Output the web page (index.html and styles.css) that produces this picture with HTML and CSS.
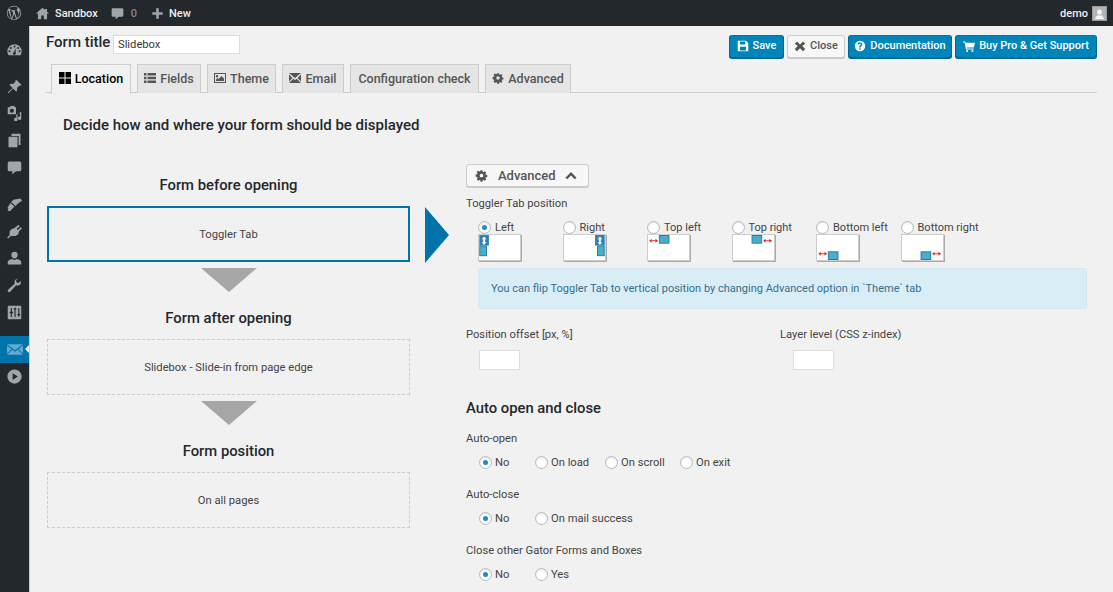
FILE: index.html
```html
<!DOCTYPE html>
<html lang="en">
<head>
    <meta charset="UTF-8">
    <title>Slidebox</title>
    <link rel="stylesheet" href="styles.css">
</head>
<body>
    <svg class="defs" width="0" height="0">
        <symbol id="i-gauge" viewBox="0 0 20 20"><path d="M10 3a9.500 9.500 0 0 0-9.500 9.500c0 1.900.6 3.600 1.500 5h16c.9-1.400 1.500-3.100 1.500-5A9.500 9.500 0 0 0 10 3zM10 4.800a1.300 1.300 0 1 1 0 2.600 1.300 1.300 0 0 1 0-2.600zM5 6.800a1.300 1.300 0 1 1 0 2.600 1.300 1.300 0 0 1 0-2.600zm10 0a1.300 1.300 0 1 1 0 2.600 1.300 1.300 0 0 1 0-2.600zM3.300 11a1.300 1.300 0 1 1 0 2.600 1.300 1.300 0 0 1 0-2.600zm13.400 0a1.300 1.300 0 1 1 0 2.600 1.300 1.300 0 0 1 0-2.600zM12.500 7.500l-1.300 6.300a1.900 1.900 0 1 1-1.900-.4z" fill-rule="evenodd"/></symbol>
        <symbol id="i-pin" viewBox="0 0 20 20"><path d="M12 .5l7.500 7.500-1.500 1-1.200-.4-3.500 3.500c.5 1.900.2 3.500-.8 5L8 12.500 2.500 18.500l-1.500.5.500-1.500L7.500 12 3 7.500c1.500-1 3.100-1.300 5-.8l3.500-3.500-.4-1.200z"/></symbol>
        <symbol id="i-media" viewBox="0 0 20 20"><path d="M1 1.500h2.500L5 0h4.500L11 1.500h1v9.500H1zM6.500 3.500a2.800 2.800 0 1 0 0 5.600 2.800 2.800 0 0 0 0-5.600z" fill-rule="evenodd"/><path d="M19 8v9a2.300 2.300 0 1 1-1.700-2.200V10L14 10.800V18.500a2.300 2.300 0 1 1-1.700-2.200V12z" transform="translate(0 -.5)"/></symbol>
        <symbol id="i-pages" viewBox="0 0 20 20"><path d="M6 1h12v15h-2.500V4H6z"/><path d="M2 5h12v14H2z"/></symbol>
        <symbol id="i-comment" viewBox="0 0 20 20"><path d="M3 2h14a2 2 0 0 1 2 2v9a2 2 0 0 1-2 2h-5l-5 4v-4H3a2 2 0 0 1-2-2V4a2 2 0 0 1 2-2z"/></symbol>
        <symbol id="i-brush" viewBox="0 0 20 20"><path d="M20 5l-2-3-9.500 1.500-3 3.500 6 5 3-3.500z"/><path d="M4.500 8L.5 14.500l1.500 1.500-1.500 2 3.500 1 6-6.500z"/></symbol>
        <symbol id="i-plugin" viewBox="0 0 20 20"><path d="M15.500 1l1.500 1.500-4 4 1.500 1.500 4-4 1.500 1.500-4 4.500-1 3.500-3.500 2.500H5L2 19H.5v-1.500L3.500 15v-5l2.500-3.500 3.500-1z"/></symbol>
        <symbol id="i-user" viewBox="0 0 20 20"><path d="M10 1a4.200 4.200 0 0 1 4.200 4.200c0 2.600-1.800 4.800-4.200 4.800S5.800 7.800 5.800 5.200A4.200 4.200 0 0 1 10 1zM7 10.500c1.800 1.500 4.200 1.500 6 0 3.500.5 6 2 6 4.500v3H1v-3c0-2.500 2.500-4 6-4.500z"/></symbol>
        <symbol id="i-wrench" viewBox="0 0 20 20"><path d="M14.500 1C12 1 10 3 10 5.500c0 .7.100 1.300.4 1.900L1.500 15.500c-.8.800-.7 2 0 2.800s2 .8 2.800 0l7.800-8.800c.6.300 1.200.5 2 .5 2.500 0 4.500-2 4.500-4.500 0-.5-.1-1-.2-1.500l-3 2.700-2.800-1-.7-2.700 2.900-2.300c-.2 0-.8-.2-1.300-.2z"/></symbol>
        <symbol id="i-sliders" viewBox="0 0 20 20"><path d="M2 1h16a1 1 0 0 1 1 1v16a1 1 0 0 1-1 1H2a1 1 0 0 1-1-1V2a1 1 0 0 1 1-1zM5 4v5H3.500v2H5v5h1.500v-5H8V9H6.500V4zm3.500 2l1.500 0v10h1.500V6H13l-2.200-3zM15 4v8h-1.500l2.200 4 2.300-4H16.500V4z" fill-rule="evenodd"/></symbol>
        <symbol id="i-mail" viewBox="0 0 24 16"><path d="M0 0h24L12 9zM0 2v12l7-6.500zM24 2v12l-7-6.500zM8 8.500l4 3 4-3 8 7.500H0z"/></symbol>
        <symbol id="i-play" viewBox="0 0 20 20"><path d="M10 .5a9.500 9.500 0 1 1 0 19 9.500 9.500 0 0 1 0-19zM7.500 5.500v9l7-4.500z" fill-rule="evenodd"/></symbol>
        <symbol id="i-gear" viewBox="0 0 20 20"><path d="M8.300 1h3.400l.5 2.500 1.500.6 2.100-1.400 2.400 2.400-1.400 2.100.6 1.500 2.500.5v3.400l-2.500.5-.6 1.500 1.400 2.100-2.400 2.400-2.100-1.400-1.500.6-.5 2.500H8.300l-.5-2.500-1.500-.6-2.100 1.400-2.400-2.400 1.400-2.100-.6-1.500L0 11.700V8.300l2.500-.5.600-1.500-1.400-2.100 2.400-2.400 2.100 1.400 1.500-.6zM10 6.800a3.200 3.200 0 1 0 0 6.400 3.200 3.200 0 0 0 0-6.400z" fill-rule="evenodd" transform="translate(1 1) scale(.9)"/></symbol>
    </svg>

    <div class="adminbar">
        <svg class="wp-logo" viewBox="0 0 20 20"><path d="M10 1a9 9 0 1 0 0 18 9 9 0 0 0 0-18zm0 1c2.100 0 4 .8 5.400 2.100-1-.1-1.900.6-1.900 1.600 0 .9.500 1.500 1 2.300.4.700.8 1.500.8 2.700 0 .8-.3 1.800-.7 3.100l-.9 3-3.300-9.800c.5 0 1-.1 1-.1.500 0 .4-.8 0-.7 0 0-1.500.1-2.400.1-.9 0-2.400-.1-2.400-.1-.5 0-.5.700 0 .7 0 0 .4.100.9.100l1.400 3.800-2 5.900L5 5.900c.5 0 1-.1 1-.1.500 0 .4-.8 0-.7 0 0-1.500.1-2.400.1h-.5A8 8 0 0 1 10 2zM2 10c0-1.200.3-2.300.7-3.300l3.800 10.500A8 8 0 0 1 2 10zm8 8c-.8 0-1.500-.1-2.200-.3l2.300-6.800 2.400 6.500.1.100c-.8.300-1.700.5-2.600.5zm7.100-12.200c.6 1.100.9 2.400.9 3.800 0 2.900-1.600 5.500-3.900 6.900l2.400-7c.5-1.100.6-2 .6-2.800 0-.3 0-.6 0-.9z" fill-rule="evenodd"/></svg>
        <div class="bar-item bar-site">
            <svg class="bar-icon" viewBox="0 0 20 20"><path d="M10 1L0 10h3v9h5v-6h4v6h5v-9h3l-3-2.700V3h-3v1.600z"/></svg>
            <span class="bar-strong">Sandbox</span>
        </div>
        <div class="bar-item bar-comments">
            <svg class="bar-icon" viewBox="0 0 20 20"><use href="#i-comment"/></svg>
            <span class="bar-dim">0</span>
        </div>
        <div class="bar-item bar-new">
            <svg class="bar-icon" viewBox="0 0 20 20"><path d="M8 2h4v6h6v4h-6v6H8v-6H2V8h6z"/></svg>
            <span class="bar-strong">New</span>
        </div>
        <div class="bar-user">
            <span class="bar-strong">demo</span>
            <span class="avatar"><svg viewBox="0 0 16 16"><path d="M8 3a3 3 0 0 1 3 3c0 1.800-1.300 3.500-3 3.500S5 7.800 5 6a3 3 0 0 1 3-3zM2.500 15c.2-3 2.500-4.500 3.500-4.800 1.200.8 2.800.8 4 0 1 .3 3.300 1.800 3.500 4.800z"/></svg></span>
        </div>
    </div>

    <div class="layout">
        <div class="sidemenu">
            <div class="menu-group">
                <div class="menu-item"><svg><use href="#i-gauge"/></svg></div>
            </div>
            <div class="menu-group">
                <div class="menu-item"><svg><use href="#i-pin"/></svg></div>
                <div class="menu-item"><svg><use href="#i-media"/></svg></div>
                <div class="menu-item"><svg><use href="#i-pages"/></svg></div>
                <div class="menu-item"><svg><use href="#i-comment"/></svg></div>
            </div>
            <div class="menu-group">
                <div class="menu-item"><svg><use href="#i-brush"/></svg></div>
                <div class="menu-item"><svg><use href="#i-plugin"/></svg></div>
                <div class="menu-item"><svg><use href="#i-user"/></svg></div>
                <div class="menu-item"><svg><use href="#i-wrench"/></svg></div>
                <div class="menu-item"><svg><use href="#i-sliders"/></svg></div>
            </div>
            <div class="menu-group">
                <div class="menu-item active"><svg class="mail-icon"><use href="#i-mail"/></svg></div>
                <div class="menu-item"><svg><use href="#i-play"/></svg></div>
            </div>
        </div>

        <div class="content">
            <div class="topline">
                <div class="title-wrap">
                    <label class="form-title">Form title</label>
                    <input class="title-input" type="text" value="Slidebox">
                </div>
                <div class="actions">
                    <button class="btn primary btn-save">
                        <svg viewBox="0 0 16 16"><path d="M1 1h11l3 3v11H1zM4 2v4h7V2zM4 9v5h8V9z" fill-rule="evenodd"/></svg>Save
                    </button>
                    <button class="btn plain btn-close">
                        <svg viewBox="0 0 16 16"><path d="M4 2l4 4 4-4 3 3-4 3 4 4-3 3-4-4-4 4-3-3 4-4-4-3z"/></svg>Close
                    </button>
                    <button class="btn primary btn-docs">
                        <svg viewBox="0 0 16 16"><path d="M8 1a7 7 0 1 1 0 14A7 7 0 0 1 8 1zM7 11v2h2v-2zM8 3C6.300 3 5 4 4.800 5.500l1.900.4C6.900 5.200 7.300 4.800 8 4.800c.7 0 1.200.4 1.200 1 0 .5-.3.8-1 1.200C7.300 7.500 7 8.100 7 9v1h2v-.7c0-.4.200-.6.800-1C10.600 7.700 11.200 7 11.200 5.800 11.200 4.100 9.800 3 8 3z" fill-rule="evenodd"/></svg>Documentation
                    </button>
                    <button class="btn primary btn-buy">
                        <svg viewBox="0 0 16 16"><path d="M0 2h3l.5 1.500H16l-1.500 6.500H5l.3 1.200h9v1.300H4L2 3.300H0z"/><circle cx="5.500" cy="14.500" r="1.300"/><circle cx="12.500" cy="14.500" r="1.300"/></svg>Buy Pro &amp; Get Support
                    </button>
                </div>
            </div>

            <div class="tabs">
                <div class="tab current tab-location">
                    <svg viewBox="0 0 12 12"><path d="M0 0h5.500v5.500H0zM6.500 0H12v5.500H6.500zM0 6.500h5.500V12H0zM6.500 6.500H12V12H6.500z"/></svg>Location
                </div>
                <div class="tab tab-fields">
                    <svg viewBox="0 0 12 12"><path d="M0 1h2.500v2.500H0zM3.500 1H12v2.500H3.500zM0 4.700h2.500v2.500H0zM3.500 4.700H12v2.500H3.500zM0 8.400h2.500v2.500H0zM3.500 8.400H12v2.500H3.500z"/></svg>Fields
                </div>
                <div class="tab tab-theme">
                    <svg viewBox="0 0 12 12"><path d="M0 1h12v10H0zM1 2v8h10V2zM3 3a1.200 1.200 0 1 1 0 2.400A1.200 1.200 0 0 1 3 3zM2 9V7.500L3.500 6l1 1 3-3L10 6.500V9z" fill-rule="evenodd"/></svg>Theme
                </div>
                <div class="tab tab-email">
                    <svg viewBox="0 0 12 10"><path d="M0 0h12L6 5zM0 1.500v7L3.500 5zM12 1.500v7L8.500 5zM4.300 5.700L6 7l1.700-1.300L12 10H0z"/></svg>Email
                </div>
                <div class="tab tab-config">Configuration check</div>
                <div class="tab tab-advanced">
                    <svg viewBox="0 0 20 20"><use href="#i-gear"/></svg>Advanced
                </div>
            </div>

            <h2 class="lead">Decide how and where your form should be displayed</h2>

            <div class="columns">
                <div class="flow-col">
                    <h3 class="step-title">Form before opening</h3>
                    <div class="step-box selected">Toggler Tab</div>
                    <div class="down-arrow"></div>
                    <h3 class="step-title">Form after opening</h3>
                    <div class="step-box">Slidebox - Slide-in from page edge</div>
                    <div class="down-arrow"></div>
                    <h3 class="step-title">Form position</h3>
                    <div class="step-box">On all pages</div>
                </div>

                <div class="right-arrow"></div>

                <div class="options-col">
                    <button class="adv-toggle">
                        <svg class="adv-gear" viewBox="0 0 20 20"><use href="#i-gear"/></svg>
                        <span>Advanced</span>
                        <svg class="adv-chevron" viewBox="0 0 14 10"><path d="M7 1l6.500 6.500-2 2L7 5 2.500 9.500l-2-2z"/></svg>
                    </button>

                    <div class="field-label tab-pos-label">Toggler Tab position</div>
                    <div class="tab-positions">
                        <div class="pos">
                            <div class="radio-line"><span class="radio on"></span>Left</div>
                            <svg class="preview" viewBox="0 0 42 26">
                                <rect x="0" y="0" width="10" height="11" fill="#2f7fb8"/>
                                <path d="M5 1.500l2.500 3h-1.500v3h1.500l-2.500 3-2.500-3h1.500v-3h-1.500z" fill="#fff"/>
                                <rect x="0.500" y="11.500" width="7" height="10" fill="#4badcc" stroke="#1f7f9c"/>
                            </svg>
                        </div>
                        <div class="pos">
                            <div class="radio-line"><span class="radio"></span>Right</div>
                            <svg class="preview" viewBox="0 0 42 26">
                                <rect x="32" y="0" width="10" height="11" fill="#2f7fb8"/>
                                <path d="M37 1.500l2.500 3h-1.500v3h1.500l-2.500 3-2.500-3h1.500v-3h-1.500z" fill="#fff"/>
                                <rect x="34.500" y="11.500" width="7" height="10" fill="#4badcc" stroke="#1f7f9c"/>
                            </svg>
                        </div>
                        <div class="pos">
                            <div class="radio-line"><span class="radio"></span>Top left</div>
                            <svg class="preview" viewBox="0 0 42 26">
                                <path d="M1.500 6h8" stroke="#d0312d" fill="none"/>
                                <path d="M1 6l2.500-2v4zM10 6L7.500 4v4z" fill="#d0312d"/>
                                <rect x="11.500" y="0.500" width="10" height="8" fill="#4badcc" stroke="#1f7f9c"/>
                            </svg>
                        </div>
                        <div class="pos">
                            <div class="radio-line"><span class="radio"></span>Top right</div>
                            <svg class="preview" viewBox="0 0 42 26">
                                <rect x="19.500" y="0.500" width="10" height="8" fill="#4badcc" stroke="#1f7f9c"/>
                                <path d="M32 6h8" stroke="#d0312d" fill="none"/>
                                <path d="M31 6l2.500-2v4zM40 6l-2.500-2v4z" fill="#d0312d"/>
                            </svg>
                        </div>
                        <div class="pos">
                            <div class="radio-line"><span class="radio"></span>Bottom left</div>
                            <svg class="preview" viewBox="0 0 42 26">
                                <path d="M2 19.500h8" stroke="#d0312d" fill="none"/>
                                <path d="M1 19.500l2.500-2v4zM10 19.500l-2.500-2v4z" fill="#d0312d"/>
                                <rect x="11.500" y="17.500" width="10" height="8" fill="#4badcc" stroke="#1f7f9c"/>
                            </svg>
                        </div>
                        <div class="pos">
                            <div class="radio-line"><span class="radio"></span>Bottom right</div>
                            <svg class="preview" viewBox="0 0 42 26">
                                <rect x="19.500" y="17.500" width="10" height="8" fill="#4badcc" stroke="#1f7f9c"/>
                                <path d="M32 19.500h8" stroke="#d0312d" fill="none"/>
                                <path d="M31 19.500l2.500-2v4zM40 19.500l-2.500-2v4z" fill="#d0312d"/>
                            </svg>
                        </div>
                    </div>

                    <div class="notice">You can flip Toggler Tab to vertical position by changing Advanced option in `Theme` tab</div>

                    <div class="two-fields">
                        <div class="small-field">
                            <div class="field-label">Position offset [px, %]</div>
                            <input class="num-input" type="text">
                        </div>
                        <div class="small-field">
                            <div class="field-label">Layer level (CSS z-index)</div>
                            <input class="num-input" type="text">
                        </div>
                    </div>

                    <h3 class="section-title">Auto open and close</h3>

                    <div class="field-label">Auto-open</div>
                    <div class="radio-row">
                        <div class="radio-line w-56"><span class="radio on"></span>No</div>
                        <div class="radio-line w-70"><span class="radio"></span>On load</div>
                        <div class="radio-line w-75"><span class="radio"></span>On scroll</div>
                        <div class="radio-line"><span class="radio"></span>On exit</div>
                    </div>

                    <div class="field-label">Auto-close</div>
                    <div class="radio-row">
                        <div class="radio-line w-56"><span class="radio on"></span>No</div>
                        <div class="radio-line"><span class="radio"></span>On mail success</div>
                    </div>

                    <div class="field-label">Close other Gator Forms and Boxes</div>
                    <div class="radio-row">
                        <div class="radio-line w-56"><span class="radio on"></span>No</div>
                        <div class="radio-line"><span class="radio"></span>Yes</div>
                    </div>
                </div>
            </div>
        </div>
    </div>
</body>
</html>
```

FILE: styles.css
```css
* {
    box-sizing: border-box;
}

html, body {
    height: 100%;
}

body {
    margin: 0;
    overflow: hidden;
    background: #f1f1f1;
    color: #444;
    font-family: Roboto, "Liberation Sans", sans-serif;
    font-size: 11.200px;
}

.defs {
    position: absolute;
}

/* top bar */
.adminbar {
    height: 26px;
    background: #23282d;
    color: #eee;
    display: flex;
    align-items: center;
    font-size: 11px;
}

.wp-logo {
    width: 16px;
    height: 16px;
    margin-left: 6px;
    fill: #a0a5aa;
}

.bar-item {
    display: flex;
    align-items: center;
}

.bar-icon {
    width: 13px;
    height: 13px;
    fill: #a0a5aa;
}

.bar-site {
    margin-left: 14px;
}

.bar-site .bar-icon {
    margin-right: 6px;
}

.bar-comments {
    margin-left: 13px;
}

.bar-comments .bar-icon {
    margin-right: 7px;
}

.bar-new {
    margin-left: 14px;
}

.bar-new .bar-icon {
    margin-right: 5px;
}

.bar-strong {
    font-weight: 500;
    color: #eee;
}

.bar-dim {
    color: #82878c;
    font-weight: 500;
}

.bar-user {
    margin-left: auto;
    margin-right: 6px;
    display: flex;
    align-items: center;
    gap: 4px;
}

.avatar {
    width: 15px;
    height: 15px;
    background: #b4b4b4;
    border: 1px solid #999;
    display: block;
}

.avatar svg {
    display: block;
    width: 13px;
    height: 13px;
    fill: #f4f4f4;
}

/* layout */
.layout {
    display: flex;
    height: 566px;
}

.sidemenu {
    width: 30px;
    flex: none;
    background: #23282d;
    border-right: 1px solid #c9cbcd;
    padding-top: 10px;
    display: flex;
    flex-direction: column;
    gap: 10px;
}

.menu-item {
    height: 27px;
    display: flex;
    align-items: center;
    justify-content: center;
    position: relative;
}

.menu-item svg {
    width: 15px;
    height: 15px;
    fill: #a0a5aa;
}

.menu-item.active {
    background: #0073aa;
}

.menu-item.active svg {
    width: 16px;
    height: 11px;
    fill: #64a9cf;
}

.menu-item.active::after {
    content: "";
    position: absolute;
    right: 0;
    top: 9px;
    border: 4px solid transparent;
    border-right: 4px solid #f1f1f1;
    border-left-width: 0;
}

.content {
    flex: 1;
    padding: 9px 16px 0 16px;
    min-width: 0;
}

.topline {
    display: flex;
    justify-content: space-between;
    height: 29px;
}

.title-wrap {
    display: flex;
    align-items: flex-start;
    gap: 4px;
}

.form-title {
    width: 64px;
    margin-right: -1px;
    font-size: 15px;
    font-weight: 500;
    color: #23282d;
    line-height: 14px;
    white-space: nowrap;
}

.title-input {
    width: 127px;
    height: 19px;
    border: 1px solid #ddd;
    background: #fff;
    padding: 0 4px;
    font: 11.200px Roboto, "Liberation Sans", sans-serif;
    color: #32373c;
}

.actions {
    display: flex;
    gap: 3px;
    height: 23px;
}

.btn {
    height: 23px;
    border-radius: 3px;
    font: 500 11px Roboto, "Liberation Sans", sans-serif;
    padding: 0 0 2px;
    display: flex;
    align-items: center;
    justify-content: center;
    gap: 4px;
    border: 1px solid #006799;
}

.btn svg {
    width: 12px;
    height: 12px;
    fill: currentColor;
}

.btn-save {
    width: 55px;
}

.btn-close {
    width: 58px;
}

.btn-docs {
    width: 104px;
}

.btn-buy {
    width: 142px;
}

.btn.primary {
    background: #0085ba;
    color: #fff;
    border-color: #0073aa #006799 #006799;
    box-shadow: 0 1px 0 #006799;
}

.btn.plain {
    background: #f7f7f7;
    color: #555;
    border-color: #ccc;
    box-shadow: 0 1px 0 #ccc;
}

/* tabs */
.tabs {
    display: flex;
    height: 29px;
    padding-left: 5px;
    border-bottom: 1px solid #ccc;
}

.tab {
    height: 29px;
    margin-right: 6px;
    padding-bottom: 2px;
    display: flex;
    align-items: center;
    justify-content: center;
    gap: 4px;
    background: #e5e5e5;
    border: 1px solid #ccc;
    border-bottom: none;
    font-size: 12.500px;
    font-weight: 500;
    color: #555;
}

.tab svg {
    width: 12px;
    height: 12px;
    fill: #555;
}

.tab-location {
    width: 80px;
}

.tab-fields {
    width: 64px;
}

.tab-theme {
    width: 69px;
}

.tab-email {
    width: 62px;
}

.tab-config {
    width: 129px;
}

.tab-advanced {
    width: 86px;
}

.tab.current {
    background: #f1f1f1;
    color: #000;
    height: 30px;
    padding-bottom: 3px;
}

.tab.current svg {
    fill: #000;
}

.lead {
    margin: 24px 0 0 17px;
    font-size: 15px;
    font-weight: 500;
    line-height: 17px;
    color: #23282d;
}

.columns {
    display: flex;
    align-items: flex-start;
}

/* left column */
.flow-col {
    width: 363px;
    margin-left: 1px;
    padding-top: 43px;
    flex: none;
}

.step-title {
    margin: 0;
    height: 29px;
    font-size: 14.800px;
    font-weight: 500;
    line-height: 17px;
    text-align: center;
    color: #23282d;
}

.step-box {
    height: 56px;
    border: 1px dashed #ccc;
    display: flex;
    align-items: center;
    justify-content: center;
    color: #444;
}

.step-box.selected {
    border: 2px solid #0073aa;
}

.down-arrow {
    width: 0;
    margin: 6px auto 18px;
    border-top: 24px solid #a6a6a6;
    border-left: 28px solid transparent;
    border-right: 28px solid transparent;
}

.right-arrow {
    width: 0;
    flex: none;
    margin: 73px 17px 0 15px;
    border-left: 24px solid #0073aa;
    border-top: 28px solid transparent;
    border-bottom: 28px solid transparent;
}

/* right column */
.options-col {
    flex: 1;
    padding-top: 30px;
    padding-right: 10px;
}

.adv-toggle {
    width: 123px;
    height: 23px;
    background: #f7f7f7;
    border: 1px solid #ccc;
    border-radius: 3px;
    box-shadow: 0 1px 0 #ccc;
    display: flex;
    align-items: center;
    padding: 0 0 0 8px;
    color: #555;
    font: 500 13px Roboto, "Liberation Sans", sans-serif;
}

.adv-gear {
    width: 13px;
    height: 13px;
    fill: #555;
    margin-right: 10px;
}

.adv-chevron {
    width: 12px;
    height: 9px;
    fill: #555;
    margin-left: 9px;
}

.field-label {
    line-height: 14px;
    color: #444;
}

.tab-pos-label {
    margin-top: 10px;
}

.tab-positions {
    display: flex;
    padding-left: 12px;
    margin-top: 9px;
    font-size: 11px;
}

.pos {
    width: 84.500px;
}

.pos .radio {
    margin-right: 4px;
}

.preview {
    display: block;
    width: 43px;
    height: 27px;
    margin-top: -2px;
    background: #fff;
    border: 1px solid #ccc;
    box-shadow: 1px 1px 0 #aaa;
}

.radio-line {
    display: flex;
    align-items: center;
    height: 16px;
    line-height: 16px;
    color: #444;
}

.radio {
    width: 13px;
    height: 13px;
    border: 1px solid #b4b9be;
    border-radius: 50%;
    background: #fff;
    box-shadow: inset 0 1px 2px rgba(0, 0, 0, .1);
    margin-right: 3px;
    position: relative;
    top: -1px;
    flex: none;
}

.radio.on::after {
    content: "";
    position: absolute;
    left: 3px;
    top: 3px;
    width: 5px;
    height: 5px;
    border-radius: 50%;
    background: #1e8cbe;
}

.notice {
    margin: 7px 0 0 12px;
    height: 41px;
    width: 609px;
    background: #d9edf7;
    border: 1px solid #d3e8f2;
    border-radius: 3px;
    color: #31708f;
    font-size: 11px;
    padding-left: 12px;
    display: flex;
    align-items: center;
}

.two-fields {
    display: flex;
    margin-top: 19px;
}

.small-field {
    width: 314px;
}

.num-input {
    display: block;
    width: 41px;
    height: 20px;
    margin: 8px 0 0 13px;
    background: #fff;
    border: 1px solid #ddd;
}

.section-title {
    margin: 29px 0 0;
    font-size: 14.800px;
    font-weight: 500;
    line-height: 18px;
    color: #23282d;
    height: 33px;
}

.radio-row {
    display: flex;
    padding-left: 13px;
    margin: 9px 0 17px;
}

.w-56 {
    width: 56px;
}

.w-70 {
    width: 70px;
}

.w-75 {
    width: 75px;
}
```
